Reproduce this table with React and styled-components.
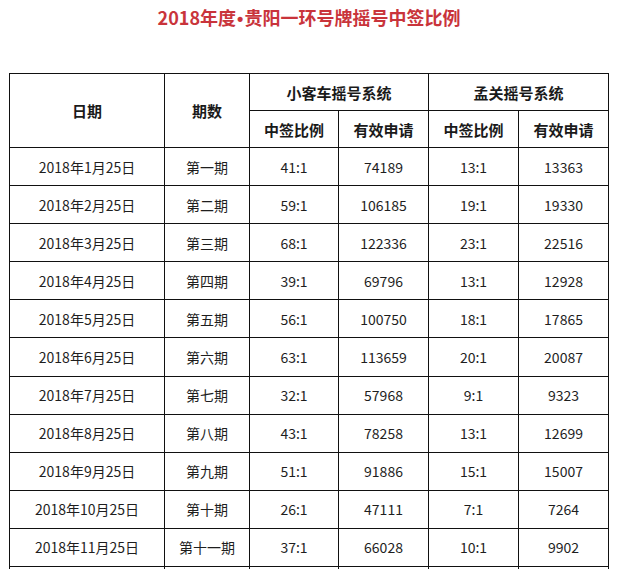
import React from "react";
import styled, { createGlobalStyle } from "styled-components";

const Global = createGlobalStyle`
  html, body { margin: 0; padding: 0; background: #fff; }
  body { font-family: "Noto Sans CJK SC", "Noto Sans", sans-serif; overflow: hidden; }
`;

const Page = styled.div`
  width: 620px;
  padding: 0 0 0 9px;
  box-sizing: border-box;
`;

const Title = styled.h1`
  margin: 0;
  padding-top: 5px;
  height: 73px;
  box-sizing: border-box;
  text-align: center;
  padding-right: 11px;
  font-size: 18px;
  line-height: 25px;
  font-weight: 700;
  color: #c9343b;
`;

const Dot = styled.span`
  font-family: "Liberation Sans", Arial, sans-serif;
  font-weight: 700;
  margin: 0 1px;
`;

const Table = styled.table`
  border-collapse: collapse;
  table-layout: fixed;
  width: 600px;
  color: #1e1e1e;
`;

const HeadCell = styled.th`
  border: 1px solid #111;
  height: ${(p) => (p.$tall ? 73 : 36)}px;
  padding: 0;
  font-size: 15px;
  font-weight: 700;
  text-align: center;
  vertical-align: middle;
  color: #1a1a1a;
`;

const Cell = styled.td`
  border: 1px solid #111;
  height: 37.1px;
  padding: 0;
  font-size: 14px;
  font-weight: 400;
  text-align: center;
  vertical-align: middle;
`;

const rows = [
  ["2018年1月25日", "第一期", "41:1", "74189", "13:1", "13363"],
  ["2018年2月25日", "第二期", "59:1", "106185", "19:1", "19330"],
  ["2018年3月25日", "第三期", "68:1", "122336", "23:1", "22516"],
  ["2018年4月25日", "第四期", "39:1", "69796", "13:1", "12928"],
  ["2018年5月25日", "第五期", "56:1", "100750", "18:1", "17865"],
  ["2018年6月25日", "第六期", "63:1", "113659", "20:1", "20087"],
  ["2018年7月25日", "第七期", "32:1", "57968", "9:1", "9323"],
  ["2018年8月25日", "第八期", "43:1", "78258", "13:1", "12699"],
  ["2018年9月25日", "第九期", "51:1", "91886", "15:1", "15007"],
  ["2018年10月25日", "第十期", "26:1", "47111", "7:1", "7264"],
  ["2018年11月25日", "第十一期", "37:1", "66028", "10:1", "9902"],
  ["", "", "", "", "", ""],
];

export default function App() {
  return (
    <>
      <Global />
      <Page>
        <Title>
          2018年度<Dot>•</Dot>贵阳一环号牌摇号中签比例
        </Title>
        <Table>
          <colgroup>
            <col style={{ width: 155 }} />
            <col style={{ width: 85 }} />
            <col style={{ width: 89 }} />
            <col style={{ width: 90 }} />
            <col style={{ width: 90 }} />
            <col style={{ width: 90 }} />
          </colgroup>
          <thead>
            <tr>
              <HeadCell rowSpan={2} $tall>日期</HeadCell>
              <HeadCell rowSpan={2} $tall>期数</HeadCell>
              <HeadCell colSpan={2}>小客车摇号系统</HeadCell>
              <HeadCell colSpan={2}>孟关摇号系统</HeadCell>
            </tr>
            <tr>
              <HeadCell>中签比例</HeadCell>
              <HeadCell>有效申请</HeadCell>
              <HeadCell>中签比例</HeadCell>
              <HeadCell>有效申请</HeadCell>
            </tr>
          </thead>
          <tbody>
            {rows.map((r, i) => (
              <tr key={i}>
                {r.map((c, j) => (
                  <Cell key={j}>{c}</Cell>
                ))}
              </tr>
            ))}
          </tbody>
        </Table>
      </Page>
    </>
  );
}
